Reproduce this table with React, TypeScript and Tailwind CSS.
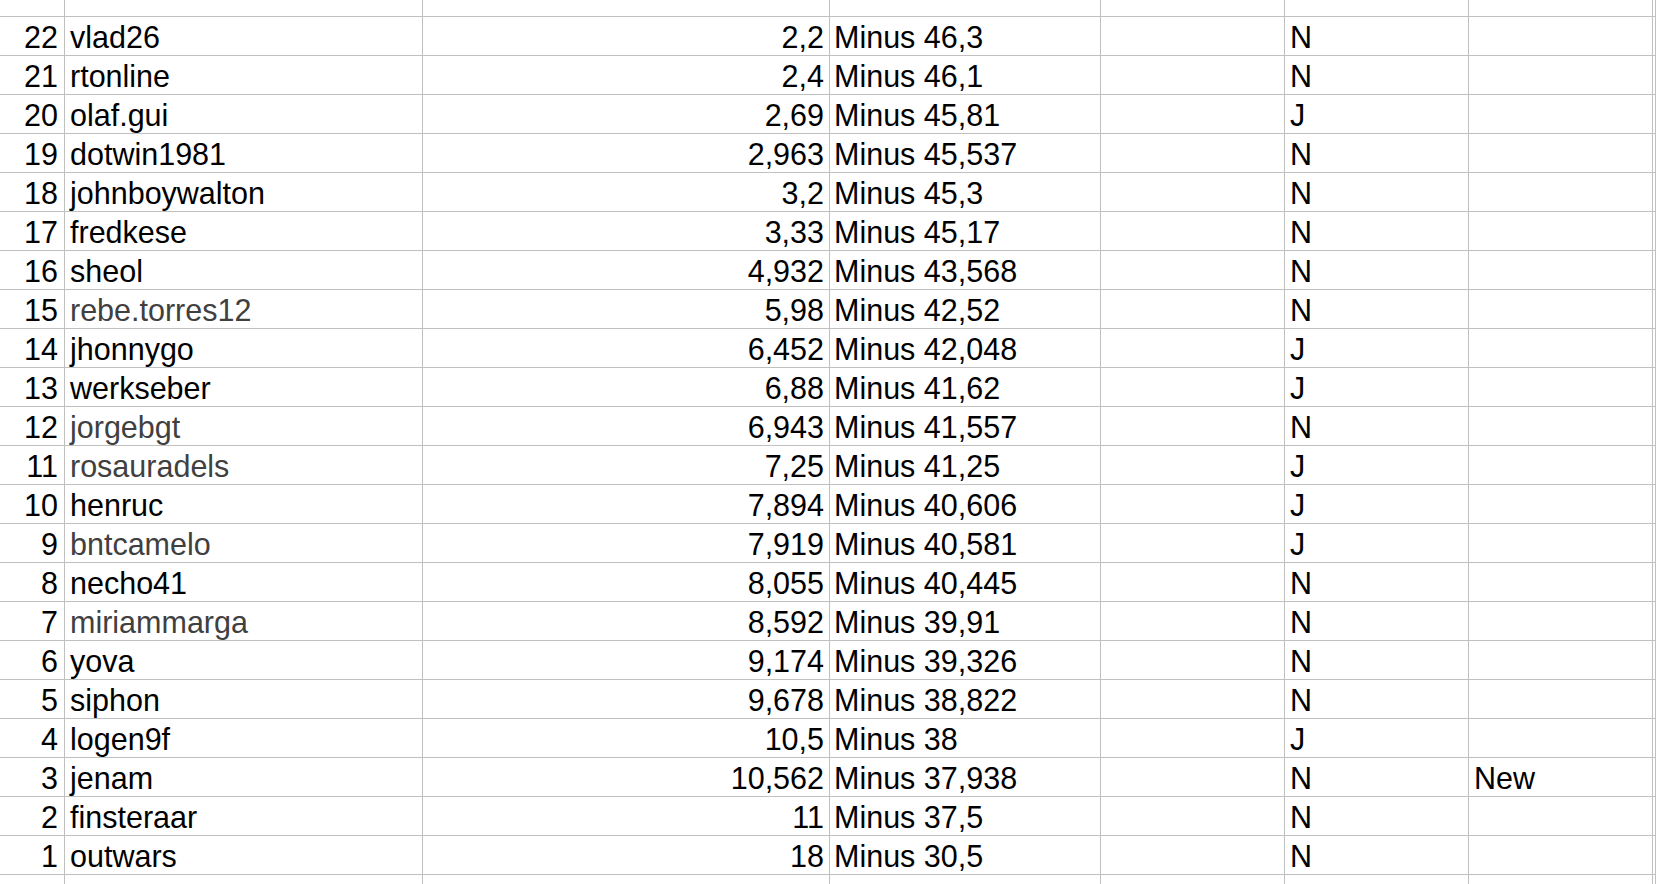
type Row = {
  rank: number
  name: string
  value: string
  minus: string
  flag: 'J' | 'N'
  note?: string
  muted?: boolean
}

const rows: Row[] = [
  { rank: 22, name: 'vlad26', value: '2,2', minus: 'Minus 46,3', flag: 'N' },
  { rank: 21, name: 'rtonline', value: '2,4', minus: 'Minus 46,1', flag: 'N' },
  { rank: 20, name: 'olaf.gui', value: '2,69', minus: 'Minus 45,81', flag: 'J' },
  { rank: 19, name: 'dotwin1981', value: '2,963', minus: 'Minus 45,537', flag: 'N' },
  { rank: 18, name: 'johnboywalton', value: '3,2', minus: 'Minus 45,3', flag: 'N' },
  { rank: 17, name: 'fredkese', value: '3,33', minus: 'Minus 45,17', flag: 'N' },
  { rank: 16, name: 'sheol', value: '4,932', minus: 'Minus 43,568', flag: 'N' },
  { rank: 15, name: 'rebe.torres12', value: '5,98', minus: 'Minus 42,52', flag: 'N', muted: true },
  { rank: 14, name: 'jhonnygo', value: '6,452', minus: 'Minus 42,048', flag: 'J' },
  { rank: 13, name: 'werkseber', value: '6,88', minus: 'Minus 41,62', flag: 'J' },
  { rank: 12, name: 'jorgebgt', value: '6,943', minus: 'Minus 41,557', flag: 'N', muted: true },
  { rank: 11, name: 'rosauradels', value: '7,25', minus: 'Minus 41,25', flag: 'J', muted: true },
  { rank: 10, name: 'henruc', value: '7,894', minus: 'Minus 40,606', flag: 'J' },
  { rank: 9, name: 'bntcamelo', value: '7,919', minus: 'Minus 40,581', flag: 'J', muted: true },
  { rank: 8, name: 'necho41', value: '8,055', minus: 'Minus 40,445', flag: 'N' },
  { rank: 7, name: 'miriammarga', value: '8,592', minus: 'Minus 39,91', flag: 'N', muted: true },
  { rank: 6, name: 'yova', value: '9,174', minus: 'Minus 39,326', flag: 'N' },
  { rank: 5, name: 'siphon', value: '9,678', minus: 'Minus 38,822', flag: 'N' },
  { rank: 4, name: 'logen9f', value: '10,5', minus: 'Minus 38', flag: 'J' },
  { rank: 3, name: 'jenam', value: '10,562', minus: 'Minus 37,938', flag: 'N', note: 'New' },
  { rank: 2, name: 'finsteraar', value: '11', minus: 'Minus 37,5', flag: 'N' },
  { rank: 1, name: 'outwars', value: '18', minus: 'Minus 30,5', flag: 'N' },
]

const cell =
  'h-[39px] border-r border-b border-[#c0c0c0] pt-[3px] leading-[35px] whitespace-nowrap overflow-hidden'

function EmptyRow({ tall }: { tall?: boolean }) {
  const h = tall ? 'h-[39px]' : 'h-[17px]'
  return (
    <>
      {Array.from({ length: 8 }).map((_, i) => (
        <div key={i} className={`${h} border-r border-b border-[#c0c0c0]`} />
      ))}
    </>
  )
}

export default function App() {
  return (
    <div className="h-[884px] overflow-hidden bg-white text-black font-['Liberation_Sans',Arial,sans-serif] text-[30.5px]">
      <div className="grid grid-cols-[65px_358px_407px_271px_184px_184px_184px_1fr]">
        <EmptyRow />
        {rows.map((row) => (
          <div key={row.rank} className="contents">
            <div className={`${cell} pr-[6px] text-right`}>{row.rank}</div>
            <div className={`${cell} pl-[5px] ${row.muted ? 'text-[#404040]' : ''}`}>{row.name}</div>
            <div className={`${cell} pr-[5px] text-right`}>{row.value}</div>
            <div className={`${cell} pl-[4px]`}>{row.minus}</div>
            <div className={cell} />
            <div className={`${cell} pl-[5px]`}>{row.flag}</div>
            <div className={`${cell} pl-[5px]`}>{row.note ?? ''}</div>
            <div className={cell} />
          </div>
        ))}
        <EmptyRow tall />
      </div>
    </div>
  )
}
